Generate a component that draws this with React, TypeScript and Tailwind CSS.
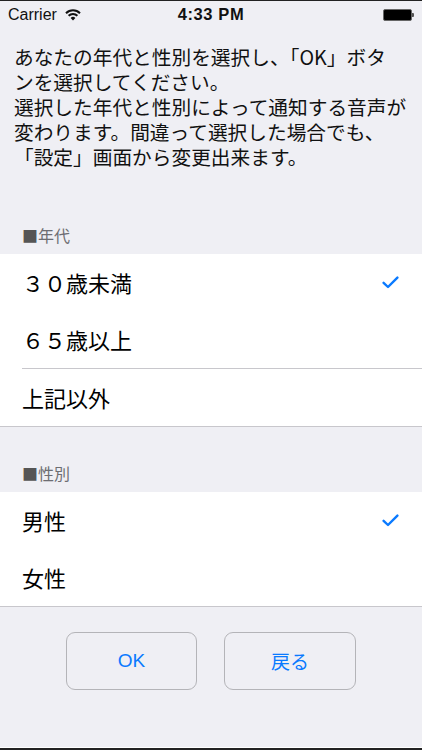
import React from 'react';

const jp = { fontFamily: '"Noto Sans CJK JP", "Noto Sans", sans-serif' };

const Check = () => (
    <svg width="17" height="13" viewBox="0 0 17 13" fill="none">
        <path d="M1.6 6.8 L6 11 L15.4 1.6" stroke="#0a7aff" strokeWidth="2.4" strokeLinecap="round" strokeLinejoin="round" />
    </svg>
);

const Wifi = () => (
    <svg width="16" height="12" viewBox="0 0 16 12" fill="none">
        <path d="M1 4.2 A10 10 0 0 1 15 4.2" stroke="#111" strokeWidth="2" />
        <path d="M3.6 6.8 A6.3 6.3 0 0 1 12.4 6.8" stroke="#111" strokeWidth="2" />
        <path d="M8 11.5 L5.6 8.9 A3.4 3.4 0 0 1 10.4 8.9 Z" fill="#111" />
    </svg>
);

const Battery = () => (
    <div className="flex items-center">
        <div className="w-[29px] h-[12px] border border-[#666] bg-black rounded-[2px]" />
        <div className="w-[2px] h-[4px] bg-[#555] rounded-r-[1px]" />
    </div>
);

type Row = { label: string; checked?: boolean };

const Section = ({ rows, inset }: { rows: Row[]; inset?: number }) => (
    <div>
        <div className="bg-white">
            {rows.map((r, i) => (
                <div key={i} className={i === inset ? 'border-t border-[#c8c7cc] ml-[22px]' : ''}>
                    <div
                        className={`h-[57px] flex items-center justify-between pr-[23px] text-[22px] text-black ${i === inset ? '' : 'pl-[22px]'}`}
                        style={jp}
                    >
                        <span>{r.label}</span>
                        {r.checked && <Check />}
                    </div>
                </div>
            ))}
        </div>
        <div className="h-px bg-[#c8c7cc]" />
    </div>
);

export default function App() {
    return (
        <div className="w-[422px] h-[750px] bg-[#efeff4] flex flex-col overflow-hidden">
            {/* status bar */}
            <div className="h-px bg-[#222]" />
            <div className="h-[27px] relative flex items-center justify-between px-[8px]" style={{ fontFamily: '"Liberation Sans", Arial, sans-serif' }}>
                <div className="flex items-center gap-[8px]">
                    <span className="text-[16px] text-[#111]">Carrier</span>
                    <Wifi />
                </div>
                <span className="absolute left-0 right-0 text-center text-[16.5px] font-bold tracking-[0.6px] text-[#111]">4:33 PM</span>
                <Battery />
            </div>

            {/* description */}
            <p className="pt-[16px] pl-[14px] text-[19.7px] leading-[25px] text-[#111] whitespace-nowrap" style={jp}>
                あなたの年代と性別を選択し、「OK」ボタ<br />
                ンを選択してください。<br />
                選択した年代と性別によって通知する音声が<br />
                変わります。間違って選択した場合でも、<br />
                「設定」画面から変更出来ます。
            </p>

            {/* age */}
            <div className="pt-[57px] pb-[10px] pl-[22px] text-[16px] leading-[18px] text-[#6d6d72]" style={jp}>
                <span className="text-[#555]">■</span>年代
            </div>
            <Section
                inset={2}
                rows={[{ label: '３０歳未満', checked: true }, { label: '６５歳以上' }, { label: '上記以外' }]}
            />

            {/* gender */}
            <div className="pt-[37px] pb-[10px] pl-[22px] text-[16px] leading-[18px] text-[#6d6d72]" style={jp}>
                <span className="text-[#555]">■</span>性別
            </div>
            <Section rows={[{ label: '男性', checked: true }, { label: '女性' }]} />

            {/* buttons */}
            <div className="flex justify-center gap-[27px] pt-[25px]">
                <button className="w-[131px] h-[58px] rounded-[9px] border-[1.5px] border-[#b4b4b8] text-[19px] text-[#0a7aff]" style={{ fontFamily: '"Liberation Sans", Arial, sans-serif' }}>
                    OK
                </button>
                <button className="w-[132px] h-[58px] rounded-[9px] border-[1.5px] border-[#b4b4b8] text-[19px] text-[#0a7aff]" style={jp}>
                    戻る
                </button>
            </div>

            <div className="flex-1" />
            <div className="h-px bg-white" />
            <div className="h-[2px] bg-[#222]" />
        </div>
    );
}
